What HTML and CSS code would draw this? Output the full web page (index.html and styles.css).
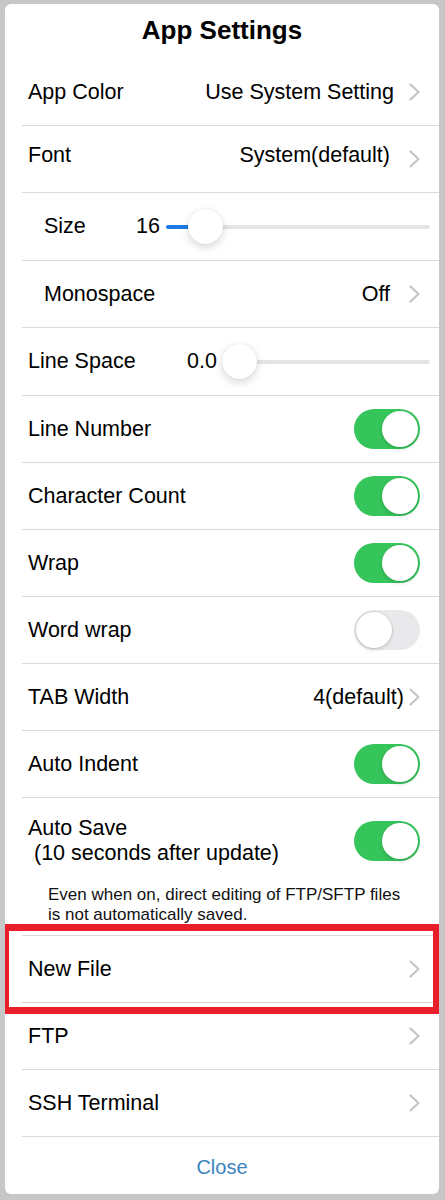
FILE: index.html
```html
<!DOCTYPE html>
<html lang="en">
<head>
    <meta charset="UTF-8">
    <meta name="viewport" content="width=device-width, initial-scale=1.0">
    <title>App Settings</title>
    <link rel="stylesheet" href="styles.css">
</head>
<body>
    <div class="sheet">
        <h1 class="sheet-title">App Settings</h1>

        <div class="row first">
            <span class="label">App Color</span>
            <span class="value">Use System Setting</span>
            <svg class="chevron" viewBox="0 0 11 18"><polyline points="1.5,1.5 9.5,9 1.5,16.5"/></svg>
        </div>

        <div class="row raised">
            <span class="label">Font</span>
            <span class="value gap-wide">System(default)</span>
            <svg class="chevron" viewBox="0 0 11 18"><polyline points="1.5,1.5 9.5,9 1.5,16.5"/></svg>
        </div>

        <div class="row slider-row indent">
            <span class="slider-label size-label">Size</span>
            <span class="slider-value">16</span>
            <div class="slider size-slider">
                <div class="slider-track"></div>
                <div class="slider-fill" style="width: 26px"></div>
                <div class="slider-knob" style="margin-left: 22px"></div>
            </div>
        </div>

        <div class="row indent">
            <span class="label">Monospace</span>
            <span class="value gap-wide">Off</span>
            <svg class="chevron" viewBox="0 0 11 18"><polyline points="1.5,1.5 9.5,9 1.5,16.5"/></svg>
        </div>

        <div class="row slider-row">
            <span class="slider-label space-label">Line Space</span>
            <span class="slider-value">0.0</span>
            <div class="slider space-slider">
                <div class="slider-track"></div>
                <div class="slider-fill" style="width: 0px"></div>
                <div class="slider-knob" style="margin-left: 0px"></div>
            </div>
        </div>

        <div class="row">
            <span class="label">Line Number</span>
            <span class="toggle on"><span class="toggle-knob"></span></span>
        </div>

        <div class="row">
            <span class="label">Character Count</span>
            <span class="toggle on"><span class="toggle-knob"></span></span>
        </div>

        <div class="row">
            <span class="label">Wrap</span>
            <span class="toggle on"><span class="toggle-knob"></span></span>
        </div>

        <div class="row">
            <span class="label">Word wrap</span>
            <span class="toggle"><span class="toggle-knob"></span></span>
        </div>

        <div class="row">
            <span class="label">TAB Width</span>
            <span class="value gap-tight">4(default)</span>
            <svg class="chevron" viewBox="0 0 11 18"><polyline points="1.5,1.5 9.5,9 1.5,16.5"/></svg>
        </div>

        <div class="row">
            <span class="label">Auto Indent</span>
            <span class="toggle on"><span class="toggle-knob"></span></span>
        </div>

        <div class="row auto-save">
            <div class="auto-save-line">
                <span class="label">Auto Save<br>&nbsp;(10 seconds after update)</span>
                <span class="toggle on"><span class="toggle-knob"></span></span>
            </div>
            <p class="note">Even when on, direct editing of FTP/SFTP files<br>is not automatically saved.</p>
        </div>

        <div class="row highlight">
            <span class="label">New File</span>
            <svg class="chevron" viewBox="0 0 11 18"><polyline points="1.5,1.5 9.5,9 1.5,16.5"/></svg>
        </div>

        <div class="row">
            <span class="label">FTP</span>
            <svg class="chevron" viewBox="0 0 11 18"><polyline points="1.5,1.5 9.5,9 1.5,16.5"/></svg>
        </div>

        <div class="row">
            <span class="label">SSH Terminal</span>
            <svg class="chevron" viewBox="0 0 11 18"><polyline points="1.5,1.5 9.5,9 1.5,16.5"/></svg>
        </div>

        <div class="row close-row">
            <button class="close-btn">Close</button>
        </div>
    </div>
</body>
</html>
```

FILE: styles.css
```css
* {
    box-sizing: border-box;
    margin: 0;
    padding: 0;
}

body {
    font-family: "Liberation Sans", Arial, sans-serif;
    color: #000;
    background: #c7c7c7;
    margin: 4px 6px 6px 5px;
}

.sheet {
    background: #fff;
    border-radius: 6px;
    height: 1190px;
}

.sheet-title {
    height: 55px;
    padding-top: 11px;
    font-size: 26px;
    line-height: 30px;
    font-weight: bold;
    text-align: center;
}

.row {
    display: flex;
    align-items: center;
    height: 67px;
    margin-left: 17px;
    padding: 0 19px 0 6px;
    border-top: 1px solid #dadadd;
    font-size: 21.5px;
}

.row.first {
    height: 66px;
    border-top: none;
}

.row.indent {
    padding-left: 22px;
}

.label {
    flex: 1;
}

.raised .label,
.raised .value {
    margin-bottom: 8px;
}

.value {
    margin-right: 15px;
}

.value.gap-wide {
    margin-right: 19px;
}

.value.gap-tight {
    margin-right: 5px;
}

.chevron {
    width: 11px;
    height: 18px;
    flex-shrink: 0;
}

.chevron polyline {
    fill: none;
    stroke: #c5c5c8;
    stroke-width: 2.3;
    stroke-linecap: round;
    stroke-linejoin: round;
}

/* sliders */
.slider-row {
    height: 68px;
    padding-right: 9px;
}

.size-label {
    width: 92px;
}

.space-label {
    width: 159px;
}

.slider {
    flex: 1;
    display: grid;
    align-items: center;
    height: 36px;
}

.size-slider {
    margin-left: 6px;
}

.space-slider {
    margin-left: 5px;
}

.slider > * {
    grid-area: 1 / 1;
}

.slider-track {
    height: 4px;
    border-radius: 2px;
    background: #e4e4e7;
}

.slider-fill {
    justify-self: start;
    height: 4px;
    border-radius: 2px;
    background: #1c7be3;
}

.slider-knob {
    justify-self: start;
    width: 35px;
    height: 35px;
    border-radius: 50%;
    background: #fff;
    box-shadow: 0 3px 8px rgba(0,0,0,0.16), 0 0 1px rgba(0,0,0,0.12);
}

/* toggles */
.toggle {
    display: flex;
    justify-content: flex-start;
    width: 66px;
    height: 40px;
    padding: 2px;
    border-radius: 20px;
    background: #e9e9eb;
    flex-shrink: 0;
}

.toggle.on {
    justify-content: flex-end;
    background: #36c55b;
}

.toggle-knob {
    width: 36px;
    height: 36px;
    border-radius: 50%;
    background: #fff;
    box-shadow: 0 2px 4px rgba(0,0,0,0.14), 0 0 0 0.5px rgba(0,0,0,0.06);
}

.toggle:not(.on) .toggle-knob {
    box-shadow: 0 2px 4px rgba(0,0,0,0.12), 0 0 0 1px rgba(0,0,0,0.07);
}

/* auto save block */
.row.auto-save {
    display: block;
    height: 138px;
    padding-top: 18px;
}

.auto-save-line {
    display: flex;
    align-items: center;
    line-height: 25px;
}

.note {
    margin-top: 19px;
    padding-left: 20px;
    font-size: 17px;
    line-height: 20px;
    color: #111;
}

/* annotation around New File */
.highlight {
    position: relative;
}

.highlight::after {
    content: '';
    position: absolute;
    top: -12px;
    left: -20px;
    right: -1px;
    bottom: -12px;
    border: 7px solid #e81f2b;
    pointer-events: none;
}

.close-row {
    height: 58px;
    justify-content: center;
    padding: 4px 17px 0 0;
}

.close-btn {
    border: none;
    background: none;
    font-family: inherit;
    font-size: 20px;
    color: #3a84bf;
    cursor: pointer;
}
```
